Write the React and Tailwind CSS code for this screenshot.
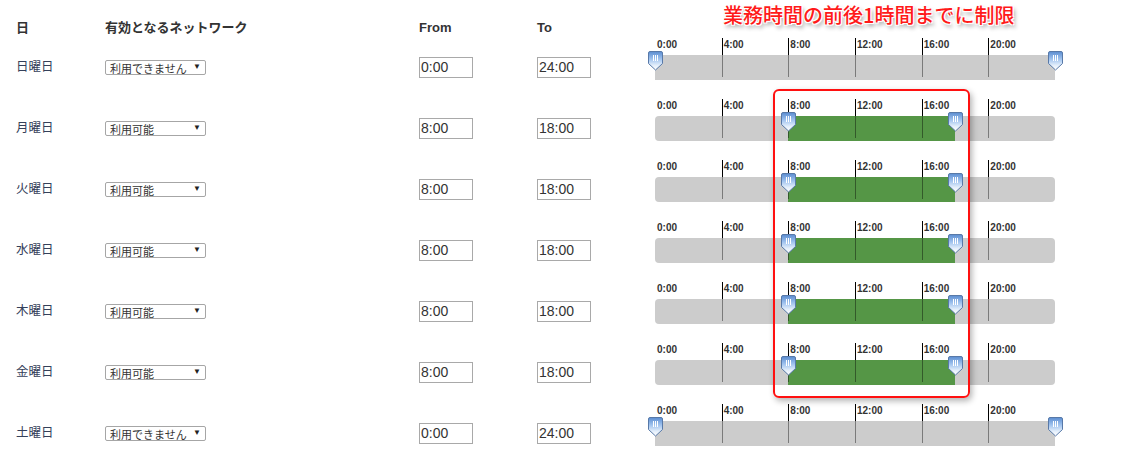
import React from "react";

const DAYS = [
  { day: "日曜日", net: "利用できません", from: 0, to: 24 },
  { day: "月曜日", net: "利用可能", from: 8, to: 18 },
  { day: "火曜日", net: "利用可能", from: 8, to: 18 },
  { day: "水曜日", net: "利用可能", from: 8, to: 18 },
  { day: "木曜日", net: "利用可能", from: 8, to: 18 },
  { day: "金曜日", net: "利用可能", from: 8, to: 18 },
  { day: "土曜日", net: "利用できません", from: 0, to: 24 },
];

const HOURS = [0, 4, 8, 12, 16, 20];
const TRACK_W = 400;
const px = (h) => (h / 24) * TRACK_W;

const fontStack = "font-['Liberation_Sans','Noto_Sans_CJK_JP',sans-serif]";
const boxClass =
  "w-[54px] h-[21px] border border-[#a9a9a9] px-[1px] text-[14px] leading-[19px] text-[#333] font-['Liberation_Sans',sans-serif]";

function Handle({ at }) {
  // handle sits on the value, so its place comes from the data
  return (
    <svg
      className="absolute top-[-4px]"
      style={{ left: px(at) - 7.5 }}
      width="15"
      height="20"
      viewBox="0 0 15 20"
    >
      <defs>
        <linearGradient id="hg" x1="0" y1="0" x2="0" y2="1">
          <stop offset="0" stopColor="#5a8cd0" />
          <stop offset="0.4" stopColor="#9fc2ee" />
          <stop offset="0.75" stopColor="#e4effb" />
          <stop offset="1" stopColor="#ffffff" />
        </linearGradient>
      </defs>
      <path
        d="M2 0.5 H13 Q14.5 0.5 14.5 2 V12.5 L7.5 19 L0.5 12.5 V2 Q0.5 0.5 2 0.5 Z"
        fill="url(#hg)"
        stroke="#5879a8"
        strokeWidth="1"
      />
      <path d="M5.5 4 V10 M7.5 4 V10 M9.5 4 V10" stroke="#ffffff" strokeWidth="1" />
    </svg>
  );
}

function TimeSlider({ from, to }) {
  const full = from === 0 && to === 24;
  return (
    <div className="flex flex-col self-stretch w-[400px] pt-[1px]">
      <div className="grid grid-cols-6 h-[17px]">
        {HOURS.map((h) => (
          <div
            key={h}
            className={
              h === 0
                ? "pl-[2px] pt-[1px] text-[10px] leading-[12px] font-bold text-[#333] font-['Liberation_Sans',sans-serif]"
                : "border-l border-black pl-[1px] pt-[1px] text-[10px] leading-[12px] font-bold text-[#333] font-['Liberation_Sans',sans-serif]"
            }
          >
            {h}:00
          </div>
        ))}
      </div>
      <div className={full ? "relative h-[25px] bg-[#cccccc]" : "relative h-[25px] bg-[#cccccc] rounded-[4px]"}>
        {!full && (
          <div
            className="absolute top-0 h-[25px] bg-[#559646]"
            style={{ left: px(from), width: px(to) - px(from) }}
          />
        )}
        <div className="relative grid grid-cols-6 h-[22px]">
          {HOURS.map((h) => (
            <div key={h} className={h === 0 ? "" : "border-l border-black/40"} />
          ))}
        </div>
        <Handle at={from} />
        <Handle at={to} />
      </div>
    </div>
  );
}

function Row({ item }) {
  return (
    <div className="flex items-center h-[61px]">
      <div className="w-[105px] pl-[16px] text-[12.5px] text-[#34405a]">{item.day}</div>
      <div className="w-[314px]">
        <div className="flex items-start justify-between w-[101px] h-[15px] pl-[4px] pr-[4px] border border-[#a6a6a6] rounded-[2px] bg-white overflow-hidden">
          <span className="pt-[1px] text-[11px] leading-[15px] text-[#333] whitespace-nowrap">{item.net}</span>
          <span className="text-[8px] leading-[12px] text-[#222] bg-white pl-[1px]">▼</span>
        </div>
      </div>
      <div className="w-[118px]">
        <div className={boxClass}>{item.from}:00</div>
      </div>
      <div className="w-[118px]">
        <div className={boxClass}>{item.to}:00</div>
      </div>
      <TimeSlider from={item.from} to={item.to} />
    </div>
  );
}

export default function App() {
  return (
    <div className={`relative w-[1127px] h-[475px] bg-white ${fontStack}`}>
      <div className="flex h-[37px] pt-[20px] text-[13px] leading-[16px] font-bold text-[#333]">
        <div className="w-[105px] pl-[16px]">日</div>
        <div className="w-[314px]">有効となるネットワーク</div>
        <div className="w-[118px]">From</div>
        <div className="w-[118px]">To</div>
      </div>
      {DAYS.map((d) => (
        <Row key={d.day} item={d} />
      ))}

      {/* annotation overlay */}
      <div className="absolute left-[723px] top-[3px] text-[20px] leading-[24px] font-medium text-[#ff1a1a] whitespace-nowrap font-['Noto_Sans_CJK_JP',sans-serif] [text-shadow:-1px_-1px_0_#fff,1px_-1px_0_#fff,-1px_1px_0_#fff,1px_1px_0_#fff,2px_3px_4px_rgba(0,0,0,0.45)]">
        業務時間の前後1時間までに制限
      </div>
      <div className="absolute left-[773px] top-[89px] w-[197px] h-[309px] border-2 border-[#ff1010] rounded-[6px] shadow-[2px_3px_6px_rgba(0,0,0,0.3)]" />
    </div>
  );
}
